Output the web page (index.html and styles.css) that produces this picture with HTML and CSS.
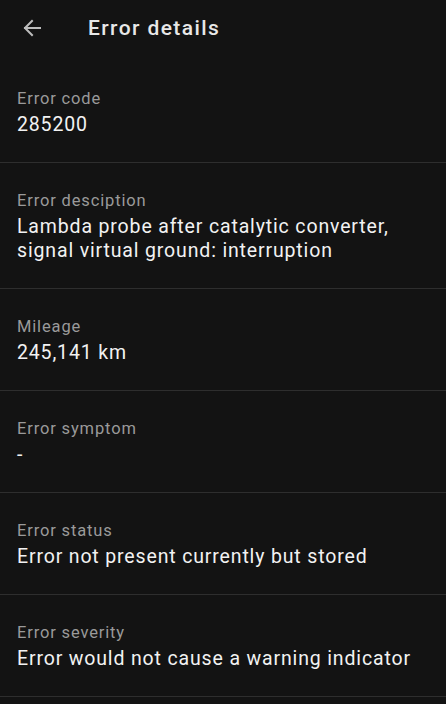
FILE: index.html
```html
<!DOCTYPE html>
<html>
<head>
<meta charset="utf-8">
<link rel="stylesheet" href="styles.css">
</head>
<body>
<div class="app">
  <header class="topbar">
    <button class="back" aria-label="Back">
      <svg width="24" height="24" viewBox="0 0 24 24"><path d="M20 12H5M12 5l-7 7 7 7" fill="none" stroke="currentColor" stroke-width="2" stroke-linecap="square"/></svg>
    </button>
    <h1 class="title">Error details</h1>
  </header>
  <section class="item">
    <div class="label">Error code</div>
    <div class="value">285200</div>
  </section>
  <section class="item">
    <div class="label">Error desciption</div>
    <div class="value">Lambda probe after catalytic converter, signal virtual ground: interruption</div>
  </section>
  <section class="item">
    <div class="label">Mileage</div>
    <div class="value">245,141 km</div>
  </section>
  <section class="item">
    <div class="label">Error symptom</div>
    <div class="value">-</div>
  </section>
  <section class="item">
    <div class="label">Error status</div>
    <div class="value">Error not present currently but stored</div>
  </section>
  <section class="item">
    <div class="label">Error severity</div>
    <div class="value">Error would not cause a warning indicator</div>
  </section>
</div>
</body>
</html>
```
FILE: styles.css
```css
html, body {
  margin: 0;
  padding: 0;
  background: #131313;
}
body {
  font-family: Roboto, "Noto Sans", sans-serif;
  color: #f2f2f2;
}
.app {
  display: flex;
  flex-direction: column;
}
.topbar {
  height: 55px;
  display: flex;
  align-items: center;
  padding: 0 0 6px 0;
}
.back {
  background: none;
  border: 0;
  padding: 0;
  margin-left: 20px;
  width: 24px;
  height: 24px;
  color: #bdbdbd;
  display: flex;
}
.title {
  margin: 0 0 0 44px;
  font-size: 21px;
  font-weight: 500;
  color: #e8e8e8;
  letter-spacing: 1.4px;
}
.item {
  padding: 27px 17px 25px;
  border-bottom: 1px solid #2e2e2e;
  display: flex;
  flex-direction: column;
  gap: 3px;
}
.label {
  font-size: 16.5px;
  line-height: 22px;
  color: #9a9a9a;
  letter-spacing: 0.85px;
}
.value {
  font-size: 19.5px;
  line-height: 24px;
  color: #f2f2f2;
  letter-spacing: 0.85px;
}
```
